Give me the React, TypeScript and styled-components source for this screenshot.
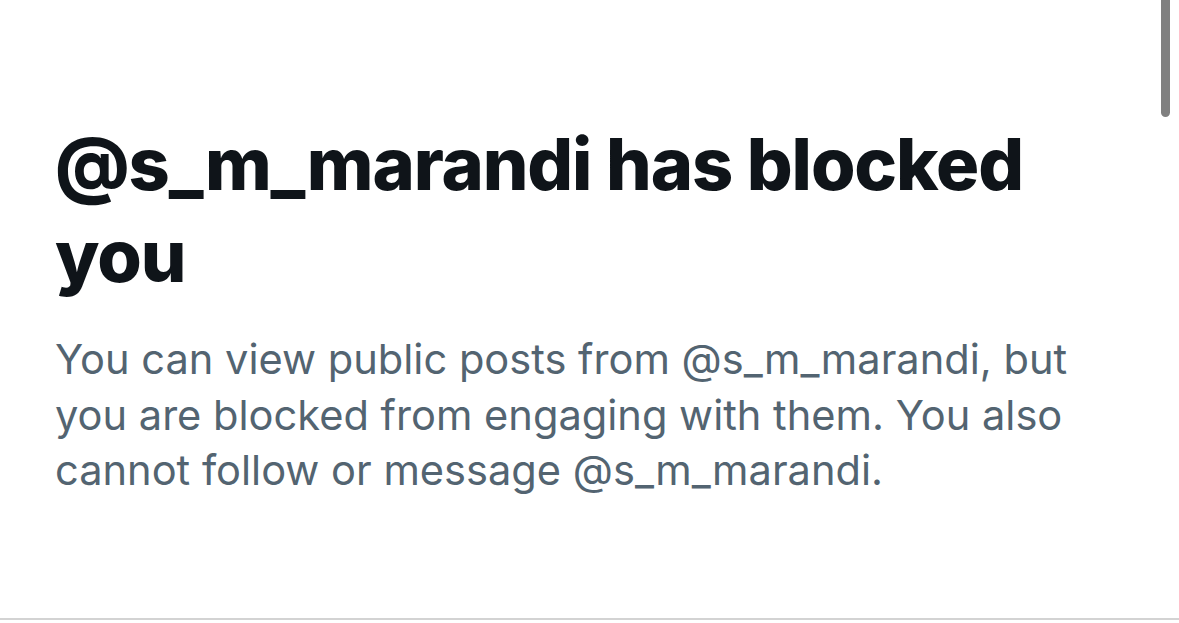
import React from 'react';
import styled, { createGlobalStyle } from 'styled-components';

const GlobalStyle = createGlobalStyle`
  html, body {
    margin: 0;
    padding: 0;
    background: #ffffff;
  }
  body {
    font-family: Inter, "Liberation Sans", sans-serif;
    -webkit-font-smoothing: antialiased;
  }
`;

const Page = styled.div`
  position: relative;
  height: 623px;
  box-sizing: border-box;
  overflow: hidden;
`;

const Panel = styled.section`
  height: 620px;
  box-sizing: border-box;
  border-bottom: 2px solid #d3d3d3;
  padding: 118px 80px 0 55px;
`;

const Title = styled.h1`
  margin: 0;
  font-size: 72px;
  line-height: 92px;
  font-weight: 800;
  letter-spacing: -1.1px;
  color: #0f1419;
`;

const Subtitle = styled.p`
  margin: 30px 0 0;
  font-size: 41.6px;
  line-height: 55.5px;
  font-weight: 400;
  color: #536471;
  max-width: 1040px;
`;

const ScrollThumb = styled.div`
  position: absolute;
  top: 0;
  right: 9px;
  width: 9px;
  height: 117px;
  border-radius: 0 0 5px 5px;
  background: #808080;
`;

const App = () => {
  const handle = '@s_m_marandi';
  const title = `${handle} has blocked you`;
  const body =
    `You can view public posts from ${handle}, but you are blocked from engaging with them. ` +
    `You also cannot follow or message ${handle}.`;

  return (
    <Page>
      <GlobalStyle />
      <Panel>
        <Title>{title}</Title>
        <Subtitle>{body}</Subtitle>
      </Panel>
      <ScrollThumb />
    </Page>
  );
};

export default App;
